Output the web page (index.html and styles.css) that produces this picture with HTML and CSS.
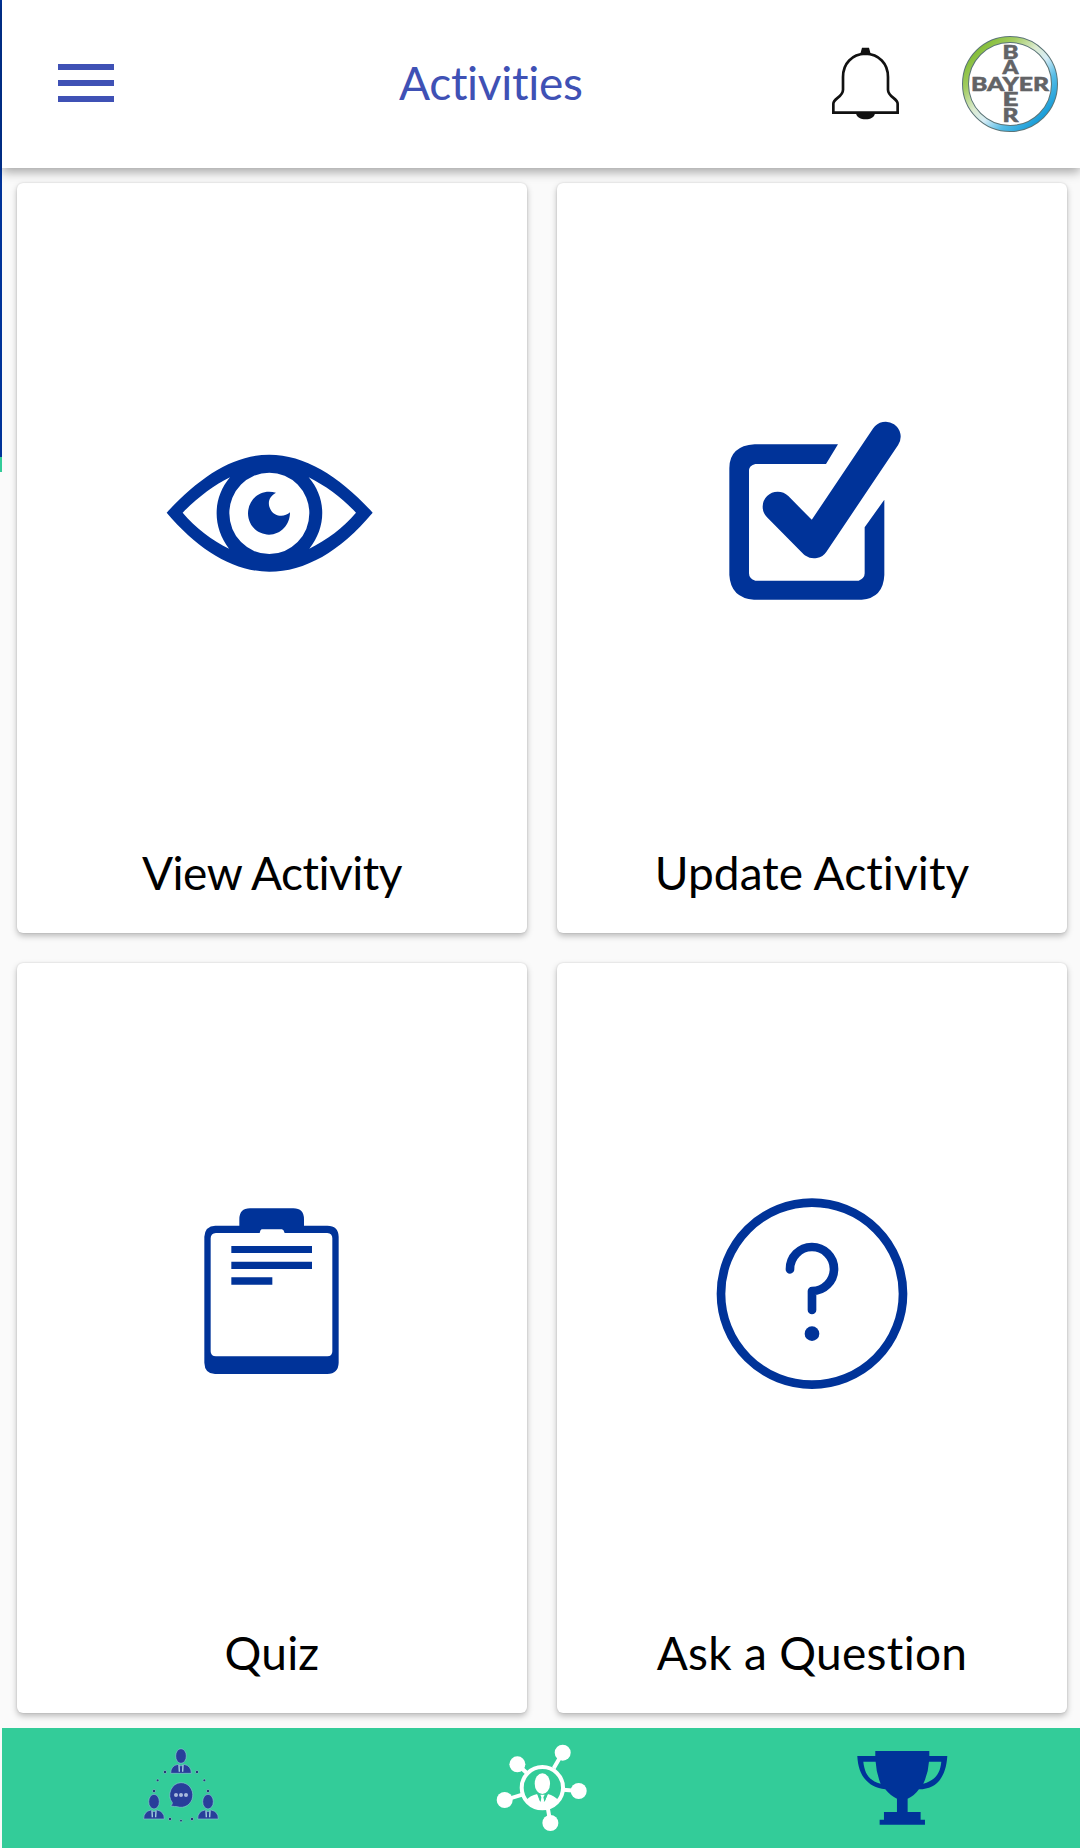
FILE: index.html
```html
<!DOCTYPE html>
<html lang="en">
<head>
<meta charset="utf-8">
<title>Activities</title>
<link rel="stylesheet" href="styles.css">
</head>
<body>
<div class="drawer-edge"></div>
<div class="app">
  <header class="toolbar">
    <svg class="menu" viewBox="0 0 56 38"><path d="M0 0h56v6H0zM0 16h56v6H0zM0 32h56v6H0z"/></svg>
    <h1 class="title">Activities</h1>
    <svg class="bell" viewBox="98 142 204 220">
      <path d="M198 162C158 164 131 191 131 232V270C131 292 102 296 102 312V339H295V312C295 296 266 292 266 270V232C266 191 239 164 198 162Z" fill="none" stroke="#111" stroke-width="8"/>
      <path d="M188 144h21l5 18h-31zM170 341h57c-2 12-13 18-28 18s-27-6-29-18z" fill="#111"/>
    </svg>
    <svg class="logo" viewBox="0 0 96 96">
      <defs>
        <linearGradient id="ring" x1="0" y1="0" x2="1" y2="1"><stop offset=".12" stop-color="#83bd38"/><stop offset=".27" stop-color="#a2cc60"/><stop offset=".44" stop-color="#dcebd0"/><stop offset=".56" stop-color="#d6edf6"/><stop offset=".7" stop-color="#55bce6"/><stop offset=".88" stop-color="#159bd7"/></linearGradient>
      </defs>
      <circle cx="48" cy="48" r="44.5" fill="#fff" stroke="#5b7477" stroke-width="7"/>
      <circle cx="48" cy="48" r="44.5" fill="none" stroke="url(#ring)" stroke-width="5"/>
      <g class="brand">
        <text x="9" y="54.5" textLength="78" lengthAdjust="spacingAndGlyphs">BAYER</text>
        <text x="40.5" y="22.7" textLength="16" lengthAdjust="spacingAndGlyphs">B</text>
        <text x="40.5" y="38" textLength="16" lengthAdjust="spacingAndGlyphs">A</text>
        <text x="40.5" y="70" textLength="16" lengthAdjust="spacingAndGlyphs">E</text>
        <text x="40.5" y="86.3" textLength="16" lengthAdjust="spacingAndGlyphs">R</text>
      </g>
    </svg>
  </header>

  <main class="grid">
    <section class="card">
      <svg class="picture" viewBox="0 0 510 660"><g transform="translate(133 247) scale(.33333)">
        <path fill-rule="evenodd" d="M50 248C150 140 250 74 358 74S570 140 668 248C570 365 465 425 358 425S145 360 50 248ZM98 248C140 205 192 165 240 142C187 205 187 290 237 356C187 332 135 292 98 248ZM618 248C576 204 528 168 476 142C530 205 530 290 478 356C530 330 580 294 618 248ZM358 128A120 122 0 1 0 358 372A120 122 0 1 0 358 128Z"/>
        <path d="M378 188C328 174 294 212 294 250C294 286 322 314 357 314C393 314 420 284 420 247C404 262 374 261 362 239C350 217 359 198 378 188Z"/>
      </g></svg>
      <h2 class="label view">View Activity</h2>
    </section>
    <section class="card">
      <svg class="picture" viewBox="0 0 510 660"><g transform="translate(153 217) scale(.33333)">
        <path d="M384 133H134Q58 138 58 205V525Q62 594 132 599H455Q520 594 523 525V299L464 382V520Q464 535 446 542H136Q117 536 117 520V210Q118 196 136 192H348Z"/>
        <path d="M527 110L312 430L203 320" fill="none" stroke="#003399" stroke-width="90" stroke-linecap="round" stroke-linejoin="round"/>
      </g></svg>
      <h2 class="label update">Update Activity</h2>
    </section>
    <section class="card">
      <svg class="picture" viewBox="0 0 510 660"><g transform="translate(173 227) scale(.33333)">
        <path fill-rule="evenodd" d="M148 107V88Q148 55 180 55H310Q342 55 342 88V107H412Q445 107 446 140V518Q445 551 412 552H75Q44 551 43 518V140Q45 108 76 107ZM78 129Q62 130 62 145V484Q62 499 78 499H412Q427 499 427 484V145Q427 130 412 129H284Q281 119 276 118H215Q211 119 209 129Z"/>
        <path d="M124 168h242v21H124zM124 215h242v22H124zM124 262h123v22H124z"/>
      </g></svg>
      <h2 class="label quiz">Quiz</h2>
    </section>
    <section class="card">
      <svg class="picture" viewBox="0 0 510 660"><g transform="translate(143 217) scale(.33333)">
        <g fill="none" stroke="#003399" stroke-width="26"><circle cx="336" cy="341" r="273"/><path stroke-linecap="round" stroke-linejoin="round" d="M270 268A66 66 0 1 1 336 333V390"/></g>
        <circle cx="336" cy="461" r="22"/>
      </g></svg>
      <h2 class="label ask">Ask a Question</h2>
    </section>
  </main>

  <nav class="tabs">
    <svg class="tab" viewBox="0 0 359.33 120">
      <defs><g id="person"><ellipse cx="0" cy="-25" rx="16" ry="22"/><path d="M-31 27Q-31 4-9 0L0 5L9 0Q31 4 31 27Z"/><path class="collar" d="M-6 2L-5 22M6 2L5 22" /></g></defs>
      <g class="team" transform="translate(128 -8) scale(.33333)">
        <use href="#person" x="153" y="133"/><use href="#person" x="72" y="270"/><use href="#person" x="234" y="270"/>
        <path d="M153 188A35 37 0 1 1 142 260Q135 260 122 258Q128 252 127 248A35 37 0 0 1 153 188Z"/>
        <g class="dots"><circle cx="105" cy="156" r="5"/><circle cx="201" cy="156" r="5"/><circle cx="83" cy="181" r="4"/><circle cx="223" cy="181" r="4"/><circle cx="72" cy="213" r="5"/><circle cx="234" cy="213" r="5"/><circle cx="120" cy="297" r="5"/><circle cx="153" cy="302" r="4"/><circle cx="186" cy="297" r="5"/></g>
        <g class="typing"><circle cx="138" cy="225" r="6"/><circle cx="153" cy="225" r="6"/><circle cx="168" cy="225" r="6"/></g>
      </g>
    </svg>
    <svg class="tab" viewBox="0 0 359.33 120">
      <g fill="#fff" transform="translate(118.7 -8) scale(.33333)">
        <circle cx="249" cy="98" r="24"/><circle cx="113" cy="133" r="24"/><circle cx="297" cy="213" r="24"/><circle cx="75" cy="240" r="24"/><circle cx="212" cy="309" r="24"/>
        <path d="M249 98L222 145M113 133L142 160M297 213L250 209M75 240L128 224M212 309L204 262" stroke="#fff" stroke-width="12"/>
        <circle cx="188" cy="203" r="62" fill="none" stroke="#fff" stroke-width="12"/>
        <ellipse cx="188" cy="191" rx="23" ry="31"/>
        <path d="M140 241Q151 226 173 222L183 245L185 232L182 224H195L191 232L194 245L204 222Q225 227 236 241Q217 265 188 265T140 241Z"/>
        <path d="M174 222L182 244M203 222L194 244" stroke="#33cc99" stroke-width="3"/>
      </g>
    </svg>
    <svg class="tab" viewBox="0 0 359.33 120">
      <g class="cup" transform="translate(119.3 -8) scale(.33333)">
        <path d="M105 93H267V108H321C317 174 287 208 236 208Q222 228 202 236V276H241V299H254V314H118V299H131V276H170V236Q151 228 135 208C85 202 54 170 51 108H105ZM69 125C73 161 87 183 121 191Q108 160 106 125ZM266 125Q264 160 249 191C284 182 300 160 303 125Z" fill-rule="evenodd"/>
      </g>
    </svg>
  </nav>
</div>
</body>
</html>
```
FILE: styles.css
```css
* { box-sizing: border-box; margin: 0; padding: 0; }

body {
  display: flex;
  width: 1080px;
  height: 1848px;
  overflow: hidden;
  background: #fafafa;
  font-family: Lato, sans-serif;
  font-variant-ligatures: none;
}

svg { display: block; flex: none; }

.drawer-edge {
  width: 2px;
  background: linear-gradient(#003399 457px, #33cc99 457px 472px, #fafafa 472px);
}

.app { display: flex; flex-direction: column; width: 1078px; }

.toolbar {
  position: relative;
  display: flex;
  align-items: center;
  height: 168px;
  padding: 0 22px 0 56px;
  background: #fff;
  box-shadow: 0 4px 10px rgba(0, 0, 0, .34);
}

.menu { width: 56px; height: 38px; margin-top: -2px; fill: #3f51b5; }

.title {
  width: 433px;
  margin: 0 0 3px 285px;
  color: #3f51b5;
  font-size: 46px;
  font-weight: 400;
  line-height: 60px;
  letter-spacing: -.3px;
  white-space: nowrap;
}

.bell { width: 68px; height: 73.3px; }
.logo { width: 96px; height: 96px; margin-left: auto; }
.brand { fill: #626366; font: 900 18px Lato, sans-serif; stroke: #626366; stroke-width: .5px; }

.grid {
  display: grid;
  grid-template-columns: 510px 510px;
  grid-template-rows: 750px 750px;
  gap: 30px;
  height: 1560px;
  padding: 15px;
}

.card {
  border-radius: 6px;
  background: #fff;
  box-shadow: 0 3px 6px rgba(0, 0, 0, .26), 0 0 2px rgba(0, 0, 0, .14);
}

.picture { width: 510px; height: 660px; fill: #003399; }

.label {
  color: #000;
  font-size: 46px;
  font-weight: 400;
  line-height: 60px;
  text-align: center;
  white-space: nowrap;
}

.view { letter-spacing: -.5px; }
.update { letter-spacing: .1px; }
.quiz { letter-spacing: .2px; }
.ask { letter-spacing: .3px; }

.tabs { display: flex; height: 120px; background: #33cc99; position: relative; }
.tab { width: 359.33px; height: 120px; }
.team { fill: #283e9a; stroke: #8ac6d2; stroke-width: 2px; }
.collar { fill: none; stroke: #a8d6e0; stroke-width: 4px; }
.dots { fill: #253b78; stroke: #78cfc0; }
.typing { fill: #a9b9dc; stroke: none; }
.cup { fill: #003399; }
```
